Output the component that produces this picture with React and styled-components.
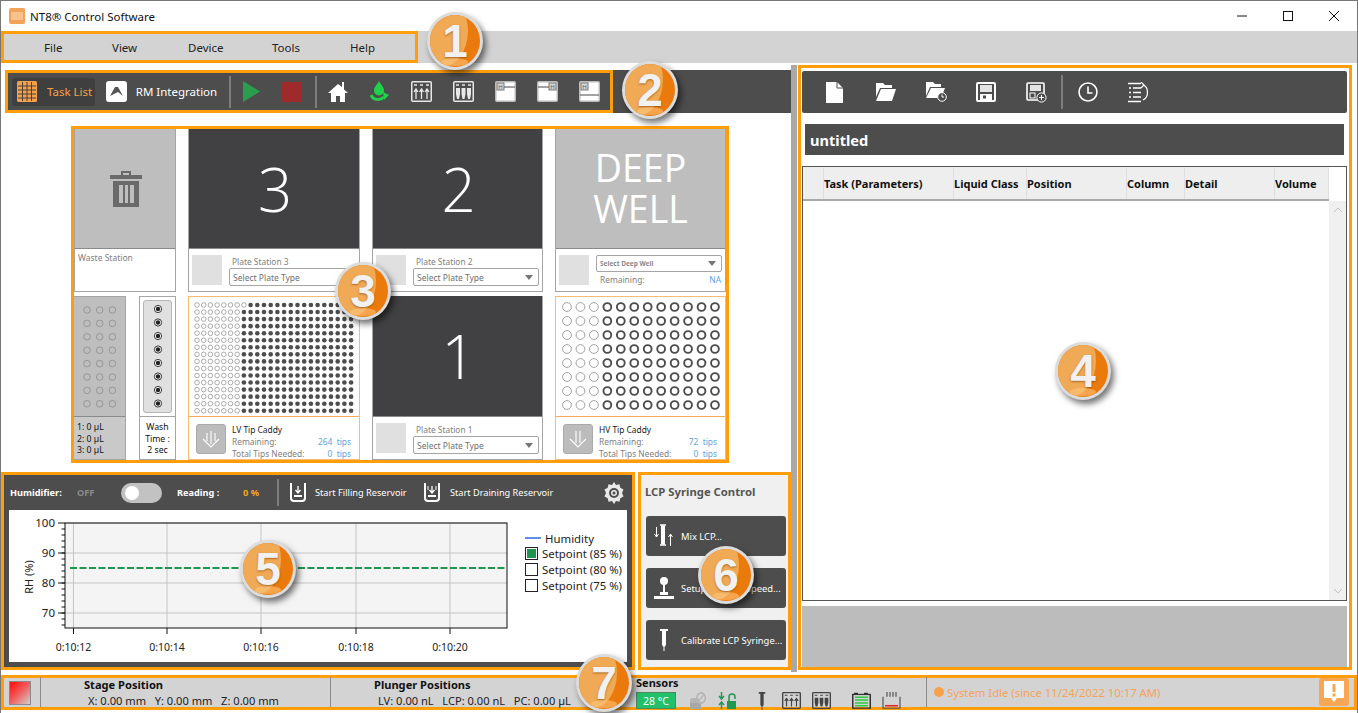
import React from 'react';
import styled, { createGlobalStyle } from 'styled-components';

const orange = '#ff9d0a';
const dark = '#4d4d4d';
const barGray = '#d3d3d3';
const font = '"Noto Sans", "Open Sans", sans-serif';

const Global = createGlobalStyle`
  html, body { margin: 0; padding: 0; background: #fff; overflow: hidden; }
  * { box-sizing: border-box; }
`;

const Window = styled.div`
  position: relative;
  width: 1358px;
  height: 713px;
  border: 1px solid #777;
  border-bottom: 0;
  font-family: ${font};
  color: #222;
  background: #fff;
  overflow: hidden;
`;

/* ---- title + menu ---- */
const TitleBar = styled.div`
  height: 30px;
  display: flex;
  align-items: center;
  padding-left: 8px;
  font-size: 11.5px;
  color: #111;
  gap: 5px;
`;
const Caption = styled.span`flex: 1;`;
const WinButtons = styled.div`
  display: flex;
  align-items: center;
  gap: 34px;
  padding-right: 17px;
`;
const MenuBar = styled.div`
  height: 32px;
  background: ${barGray};
`;
const MenuBox = styled.nav`
  width: 417px;
  height: 32px;
  border: 3px solid ${orange};
  display: grid;
  grid-template-columns: 68px 76px 84px 78px auto;
  padding-left: 40px;
  align-items: center;
  font-size: 11.5px;
  color: #222;
`;

const Main = styled.div`
  display: flex;
  margin-top: 2px;
  height: 607px;
`;
const LeftPane = styled.div`
  width: 790px;
  padding-top: 5px;
`;
const Splitter = styled.div`
  width: 6px;
  background: #a9a9a9;
`;

/* ---- main toolbar ---- */
const ToolStrip = styled.div`
  margin-left: 4px;
  height: 43px;
  background: ${dark};
`;
const ToolBox = styled.div`
  width: 608px;
  height: 43px;
  border: 3px solid ${orange};
  display: flex;
  align-items: center;
  padding-left: 4px;
`;
const TabButton = styled.div`
  display: flex;
  align-items: center;
  height: 28px;
  width: ${p => p.$w}px;
  padding-left: ${p => p.$pad}px;
  gap: ${p => p.$gap}px;
  border-radius: 3px;
  font-size: 11.5px;
  color: ${p => (p.$active ? '#f7a24b' : '#fff')};
  background: ${p => (p.$active ? '#3f3f3f' : 'transparent')};
  white-space: nowrap;
`;
const VRule = styled.div`
  width: 2px;
  height: ${p => p.$h || 32}px;
  background: #7d7d7d;
  margin: ${p => p.$m || '0'};
  flex: none;
`;
const IconSlot = styled.div`
  display: flex;
  align-items: center;
  justify-content: center;
  width: ${p => p.$w || 42}px;
`;

/* ---- deck ---- */
const Deck = styled.section`
  margin: 13px 0 0 70px;
  width: 658px;
  height: 337px;
  border: 3px solid ${orange};
  display: grid;
  grid-template-columns: 102px 172px 171px 171px;
  grid-template-rows: 163px 164px;
  column-gap: 12px;
  row-gap: 4px;
`;
const Station = styled.div`
  display: flex;
  flex-direction: column;
  border: 1px solid ${p => (p.$tip ? '#f8bb74' : '#a5a5a5')};
  border-top: ${p => (p.$tip ? '1px solid #f8bb74' : 0)};
`;
const Plate = styled.div`
  flex: 1;
  display: flex;
  align-items: center;
  justify-content: center;
  background: ${p => (p.$light ? '#bebebe' : '#414042')};
  border-bottom: 1px solid #8a8a8a;
  color: #fff;
  font-size: ${p => (p.$well ? 37.5 : 60)}px;
  font-weight: ${p => (p.$well ? 400 : 300)};
  line-height: ${p => (p.$well ? 41 : 60)}px;
  padding-left: ${p => (p.$well ? 0 : 2)}px;
  padding-bottom: ${p => (p.$well ? 2 : 0)}px;
  text-align: center;
  font-family: "Open Sans", sans-serif;
`;
const PlateFoot = styled.div`
  height: 42px;
  display: flex;
  padding: 6px 3px 0 3px;
  gap: ${p => p.$gap || 7}px;
`;
const Swatch = styled.div`
  width: 30px;
  height: 30px;
  background: #e0e0e0;
  flex: none;
`;
const FootCol = styled.div`
  flex: 1;
  min-width: 0;
  display: flex;
  flex-direction: column;
  padding-top: ${p => p.$pt || 0}px;
`;
const Tiny = styled.div`
  font-size: 8.4px;
  line-height: 12px;
  color: ${p => p.$color || '#808080'};
  padding-left: ${p => p.$pl || 0}px;
`;
const Select = styled.div`
  height: ${p => p.$h || 18}px;
  border: 1px solid #a5a5a5;
  border-radius: 2px;
  display: flex;
  align-items: center;
  justify-content: space-between;
  padding: 0 5px 0 3px;
  font-size: ${p => p.$fs || 8.5}px;
  font-weight: ${p => (p.$bold ? 700 : 400)};
  color: ${p => p.$color || '#6f6f6f'};
  background: #fff;
`;
const Caret = styled.span`
  width: 0;
  height: 0;
  border-left: 4px solid transparent;
  border-right: 4px solid transparent;
  border-top: 5px solid #777;
`;
const Row = styled.div`
  display: flex;
  justify-content: space-between;
  padding-right: ${p => p.$pr || 0}px;
  margin-top: ${p => p.$mt || 0}px;
`;
const WasteLabel = styled.div`
  height: 42px;
  padding: 3px 3px;
  font-size: 8.5px;
  color: #808080;
`;
const LeftStack = styled.div`
  display: grid;
  grid-template-columns: 52px 37px;
  column-gap: 13px;
`;
const Reservoir = styled.div`
  display: flex;
  flex-direction: column;
  border: 1px solid #a5a5a5;
  border-left: 0;
  background: #bebebe;
`;
const ReservoirFoot = styled.div`
  height: 43px;
  background: #c9c9c9;
  border-top: 1px solid #8a8a8a;
  padding: 5px 3px 0;
  font-size: 8.7px;
  line-height: 11.5px;
  color: #111;
`;
const GridArea = styled.div`
  flex: 1;
  display: flex;
  align-items: center;
  justify-content: center;
`;
const WashCol = styled.div`
  display: flex;
  flex-direction: column;
  border: 1px solid #a5a5a5;
`;
const WashWell = styled.div`
  flex: 1;
  margin: 3px;
  border: 1px solid #b5b5b5;
  border-radius: 3px;
  background: #e0e0e0;
  display: flex;
  align-items: center;
  justify-content: center;
`;
const WashFoot = styled.div`
  height: 43px;
  border-top: 1px solid #a5a5a5;
  font-size: 8.7px;
  line-height: 11.5px;
  padding-top: 5px;
  text-align: center;
  color: #111;
`;
const CaddyGrid = styled.div`
  flex: 1;
  display: flex;
  align-items: center;
  justify-content: center;
  border-bottom: 1px solid #f8a95a;
`;
const CaddyFoot = styled.div`
  height: 42px;
  display: flex;
  padding: 7px 7px 0 7px;
  gap: 6px;
`;
const EjectBtn = styled.div`
  width: 30px;
  height: 30px;
  flex: none;
  border: 1px solid #aaa;
  border-radius: 3px;
  background: #bcbcbc;
  display: flex;
  align-items: center;
  justify-content: center;
`;
const Tips = styled.span`
  color: #5aa6dd;
  white-space: pre;
`;

/* ---- humidity + LCP ---- */
const BottomRow = styled.div`
  display: flex;
  margin-top: 9px;
  gap: 3px;
  height: 198px;
`;
const HumidityPanel = styled.section`
  width: 634px;
  border: 3px solid ${orange};
  background: ${dark};
  display: flex;
  flex-direction: column;
  padding: 0 5px 5px 5px;
`;
const HumBar = styled.div`
  height: 36px;
  display: flex;
  align-items: center;
  padding-left: 1px;
  color: #fff;
  font-size: 9.2px;
`;
const HumText = styled.span`
  font-weight: ${p => (p.$bold ? 700 : 400)};
  color: ${p => p.$color || '#fff'};
  margin-left: ${p => p.$ml || 0}px;
  width: ${p => (p.$w ? `${p.$w}px` : 'auto')};
  flex: none;
  white-space: nowrap;
`;
const Toggle = styled.div`
  position: relative;
  flex: none;
  width: 41px;
  height: 20px;
  border-radius: 10px;
  background: #c2c2c2;
  &::after {
    content: "";
    position: absolute;
    left: 4px;
    top: 3px;
    width: 14px;
    height: 14px;
    border-radius: 50%;
    background: #fff;
  }
`;
const ChartCard = styled.div`
  flex: 1;
  background: #fff;
  display: flex;
`;
const Legend = styled.div`
  margin-left: 14px;
  padding-top: 21px;
  font-size: 11.4px;
  color: #222;
  white-space: nowrap;
`;
const LegendRow = styled.div`
  display: flex;
  align-items: center;
  gap: 4px;
  height: ${p => p.$h || 16}px;
`;
const LegendLine = styled.span`
  width: 16px;
  height: 2px;
  background: #5b8fe8;
`;
const CheckBox = styled.span`
  width: 13px;
  height: 13px;
  border: 1px solid #222;
  background: #fff;
  padding: 1px;
  display: block;
  &::after {
    content: "";
    display: ${p => (p.$on ? 'block' : 'none')};
    width: 100%;
    height: 100%;
    background: #1f9650;
  }
`;
const LcpPanel = styled.section`
  width: 153px;
  border: 3px solid ${orange};
  background: #f0f0f0;
  padding: 0 2px 0 5px;
`;
const LcpTitle = styled.div`
  height: 32px;
  margin: 0 0 9px -1px;
  display: flex;
  align-items: center;
  font-size: 11.3px;
  font-weight: 700;
  color: #555;
  white-space: nowrap;
`;
const LcpStack = styled.div`
  display: flex;
  flex-direction: column;
  gap: 12px;
`;
const LcpButton = styled.div`
  height: 40px;
  background: ${dark};
  border-radius: 3px;
  display: flex;
  align-items: center;
  color: #fff;
  font-size: 9.4px;
  white-space: nowrap;
`;
const LcpIcon = styled.div`
  width: 35px;
  display: flex;
  justify-content: center;
`;

/* ---- task list ---- */
const TaskPanel = styled.section`
  margin-left: 1px;
  width: 554px;
  height: 605px;
  border: 3px solid ${orange};
  padding: 3px 2px 0 1px;
  display: flex;
  flex-direction: column;
`;
const TaskTools = styled.div`
  height: 42px;
  background: ${dark};
  border-radius: 2px;
  display: flex;
  align-items: center;
  padding-left: 24px;
`;
const TaskSlot = styled.div`
  width: 50px;
  display: flex;
  align-items: center;
`;
const FileName = styled.div`
  margin: 11px 3px 0 3px;
  height: 31px;
  background: ${dark};
  color: #fff;
  font-weight: 700;
  font-size: 14.6px;
  display: flex;
  align-items: center;
  padding-left: 5px;
`;
const Table = styled.div`
  margin-top: 11px;
  height: 435px;
  border: 1px solid #555;
  display: flex;
  flex-direction: column;
`;
const HeaderRow = styled.div`
  width: 526px;
  height: 34px;
  padding-top: 1px;
  background: #eeeeee;
  border-bottom: 2px solid #a9a9a9;
  display: grid;
  grid-template-columns: 21px 130px 73px 100px 58px 90px 1fr;
  font-size: 11px;
  font-weight: 700;
  color: #111;
  white-space: nowrap;
`;
const HeadCell = styled.div`
  display: flex;
  align-items: center;
  border-right: 1px solid #dfdfdf;
  overflow: hidden;
`;
const TableBody = styled.div`
  flex: 1;
  display: flex;
  justify-content: flex-end;
`;
const ScrollTrack = styled.div`
  width: 17px;
  background: #f0f0f0;
  display: flex;
  flex-direction: column;
  justify-content: space-between;
  align-items: center;
  padding: 6px 0;
`;
const TaskFoot = styled.div`
  flex: 1;
  margin-top: 5px;
  background: #bcbcbc;
`;

/* ---- status bar ---- */
const StatusBar = styled.footer`
  margin-top: 3px;
  width: 1356px;
  height: 35px;
  border: 3px solid ${orange};
  background: ${barGray};
  display: flex;
`;
const LedCell = styled.div`
  width: 36px;
  display: flex;
  align-items: center;
  padding-left: 5px;
`;
const Led = styled.div`
  width: 22px;
  height: 24px;
  border: 1px solid #8a8a8a;
  background: linear-gradient(135deg, #ff1a1a 10%, #f06060 50%, #cfcfcf 100%);
`;
const PosCell = styled.div`
  width: ${p => p.$w}px;
  border-left: 1px solid #8a8a8a;
  padding-left: ${p => p.$pl}px;
  margin-top: -1px;
`;
const PosTitle = styled.div`
  font-size: 11.1px;
  font-weight: 700;
  line-height: 16px;
  color: #111;
`;
const PosValue = styled.div`
  font-size: 11.1px;
  line-height: 15px;
  color: #222;
  padding-left: 4px;
  white-space: pre;
`;
const SensorCell = styled.div`
  width: 306px;
  padding-left: 15px;
  border-left: 1px solid #8a8a8a;
  margin-top: -1px;
`;
const SensorTitle = styled.div`
  font-size: 11px;
  font-weight: 700;
  line-height: 12px;
  color: #111;
`;
const SensorRow = styled.div`
  display: flex;
  align-items: flex-start;
  margin-top: 3px;
`;
const Temp = styled.div`
  width: 40px;
  height: 17px;
  background: #22c06a;
  border: 1px solid #4a8a60;
  color: #fff;
  font-size: 10.5px;
  display: flex;
  align-items: center;
  justify-content: center;
`;
const SensorIcon = styled.div`
  margin-left: ${p => p.$ml}px;
  height: 17px;
`;
const IdleCell = styled.div`
  flex: 1;
  border-left: 1px solid #8a8a8a;
  margin-top: -1px;
  display: flex;
  align-items: center;
  padding-left: 7px;
  gap: 3px;
  color: #f3a35c;
  font-size: 11.3px;
`;
const IdleDot = styled.span`
  width: 10px;
  height: 10px;
  border-radius: 50%;
  background: #f7a24b;
`;
const Spacer = styled.span`flex: 1;`;
const AlertBtn = styled.div`
  width: 30px;
  height: 28px;
  margin-right: 5px;
  border-radius: 3px;
  background: #f7a754;
  display: flex;
  align-items: center;
  justify-content: center;
`;

/* ---- numbered callouts, over everything ---- */
const Badge = styled.div`
  position: absolute;
  left: ${p => p.$x - 28}px;
  top: ${p => p.$y - 29}px;
  width: 56px;
  height: 58px;
  border-radius: 50%;
  border: 3px solid #dcdcdc;
  background: #ea7a0c;
  box-shadow: 3px 4px 6px rgba(0, 0, 0, 0.55);
  display: flex;
  align-items: center;
  justify-content: center;
  overflow: hidden;
  color: #f1f1f1;
  font-family: "Liberation Sans", sans-serif;
  font-weight: 700;
  font-size: 46px;
  text-shadow: 0 1px 2px rgba(120, 60, 0, 0.6);
  &::before {
    content: "";
    position: absolute;
    left: -14px;
    top: -20px;
    width: 52px;
    height: 72px;
    border-radius: 50%;
    background: #f0a954;
  }
  &::after {
    content: "";
    position: absolute;
    left: 12px;
    bottom: 1px;
    width: 26px;
    height: 8px;
    border-radius: 50%;
    background: rgba(255, 200, 130, 0.55);
  }
`;
const BadgeNum = styled.span`
  position: relative;
  z-index: 1;
`;

/* ---- icons ---- */
const WinIcons = () => (
  <WinButtons>
    <svg width="12" height="12" viewBox="0 0 12 12"><path d="M1 6h10" stroke="#111" strokeWidth="1" /></svg>
    <svg width="12" height="12" viewBox="0 0 12 12"><rect x="1.5" y="1.5" width="9" height="9" fill="none" stroke="#111" /></svg>
    <svg width="12" height="12" viewBox="0 0 12 12"><path d="M1 1l10 10M11 1L1 11" stroke="#111" strokeWidth="1" /></svg>
  </WinButtons>
);

const AppIcon = () => (
  <svg width="16" height="16" viewBox="0 0 16 16">
    <rect width="16" height="16" rx="2" fill="#f4a259" />
    <path d="M3 4v8M5 4v8M7 4v8M9 4v8M11 4v8M13 4v8" stroke="#fde0c0" strokeWidth="1" />
  </svg>
);

const TaskGridIcon = () => (
  <svg width="20" height="21" viewBox="0 0 20 21">
    <rect width="20" height="21" rx="1.5" fill="#f4a14e" />
    <path d="M5.5 1v19M10 1v19M14.5 1v19M1 5h18M1 9h18M1 13h18M1 17h18" stroke="#4a4038" strokeWidth="1" />
  </svg>
);

const RmIcon = () => (
  <svg width="21" height="21" viewBox="0 0 21 21">
    <rect width="21" height="21" rx="3" fill="#fff" />
    <path d="M4 15l5-9h3l5 9-5-4z" fill="#555" />
  </svg>
);

const Play = () => <svg width="17" height="21" viewBox="0 0 17 21"><path d="M0 0l17 10.5L0 21z" fill="#2a9d4e" /></svg>;
const Stop = () => <svg width="20" height="20" viewBox="0 0 20 20"><rect width="20" height="20" fill="#9e2a2b" /></svg>;

const House = () => (
  <svg width="20" height="21" viewBox="0 0 20 21">
    <path d="M10 3L0 12h3v9h5v-6h4v6h5v-9h3l-4-3.6V1h-2v5z" fill="#fff" />
  </svg>
);

const PrimeDrop = () => (
  <svg width="20" height="21" viewBox="0 0 20 21">
    <path d="M9 0c2 4 5 6 5 9.5a5 5 0 0 1-10 0C4 6 7 4 9 0z" fill="#20d24a" />
    <path d="M1 14c2 5 9 6 13 2" fill="none" stroke="#20d24a" strokeWidth="3" />
    <path d="M13 11l6 3-5 5z" fill="#20d24a" />
  </svg>
);

const Rack = ({ color = '#e8e8e8', filled, w = 21, h = 21 }) => (
  <svg width={w} height={h} viewBox="0 0 21 21" preserveAspectRatio="none">
    <rect x="0.75" y="0.75" width="19.5" height="19.5" rx="1" fill="none" stroke={color} strokeWidth="1.5" />
    <path d="M3 4h3M9 4h3M15 4h3" stroke={color} strokeWidth="1.5" />
    {[5, 10.5, 16].map(x => (filled ? (
      <path key={x} d={`M${x - 2} 7h4v6l-1 5h-2l-1-5z`} fill={color} />
    ) : (
      <path key={x} d={`M${x} 18V9M${x - 2} 11l2-3 2 3`} stroke={color} fill="none" strokeWidth="1.3" />
    )))}
  </svg>
);

const Bay = ({ left, low }) => (
  <svg width="21" height="21" viewBox="0 0 21 21">
    <rect x="0.75" y="0.75" width="19.5" height="19.5" rx="1" fill="#fff" stroke="#bbb" strokeWidth="1.5" />
    <rect x={left ? 2 : 12} y="2" width="7" height="7" fill="#d8d8d8" stroke="#777" />
    <text x={left ? 5.5 : 15.5} y="7.800" fontSize="6" textAnchor="middle" fill="#555" fontFamily={font}>H</text>
    <path d={low ? 'M1 14h19' : (left ? 'M9 6h11' : 'M1 6h11')} stroke="#666" strokeWidth="1.2" />
  </svg>
);

const NewFile = () => <svg width="17" height="21" viewBox="0 0 17 21"><path d="M0 0h11l6 6v15H0z" fill="#fff" /><path d="M11 0v6h6" fill="none" stroke="#4d4d4d" /></svg>;
const OpenFolder = () => <svg width="20" height="18" viewBox="0 0 20 18"><path d="M0 2V0h7l2 2h7v3H4L0 14z" fill="#fff" /><path d="M5 6h15l-4 12H0z" fill="#fff" /></svg>;
const RecentFolder = () => (
  <svg width="21" height="20" viewBox="0 0 21 20">
    <path d="M0 2V0h7l2 2h6v3H4L0 14z" fill="#fff" /><path d="M5 6h14l-4 10H0z" fill="#fff" />
    <circle cx="16" cy="15" r="4.3" fill="#4d4d4d" stroke="#fff" /><path d="M16 12.5V15h2" fill="none" stroke="#fff" />
  </svg>
);
const Floppy = () => (
  <svg width="20" height="20" viewBox="0 0 20 20">
    <rect x="1" y="1" width="18" height="18" rx="1" fill="none" stroke="#fff" strokeWidth="2" />
    <rect x="4" y="3" width="12" height="7" fill="#fff" opacity="0.85" />
    <rect x="4" y="12" width="12" height="6" fill="#fff" /><rect x="7" y="13.5" width="3" height="3" fill="#4d4d4d" />
  </svg>
);
const FloppyPlus = () => (
  <svg width="21" height="21" viewBox="0 0 21 21">
    <rect x="1" y="1" width="17" height="17" rx="1" fill="none" stroke="#fff" strokeWidth="1.6" />
    <rect x="4" y="3" width="11" height="6" fill="#fff" opacity="0.85" />
    <rect x="4" y="11" width="5" height="5" fill="none" stroke="#fff" />
    <circle cx="15.5" cy="15.5" r="4.6" fill="#4d4d4d" stroke="#fff" /><path d="M15.5 13v5M13 15.5h5" stroke="#fff" />
  </svg>
);
const Clock = () => (
  <svg width="20" height="20" viewBox="0 0 20 20">
    <circle cx="10" cy="10" r="9" fill="none" stroke="#fff" strokeWidth="1.6" /><path d="M10 4.5V11h4.5" fill="none" stroke="#fff" strokeWidth="1.6" />
  </svg>
);
const ListUndo = () => (
  <svg width="21" height="21" viewBox="0 0 21 21">
    <path d="M0 1.5h13M0 19.5h13M5 6h8M5 10.5h8M5 15h8" stroke="#fff" strokeWidth="1.3" />
    <path d="M1 6h2M1 10.5h2M1 15h2" stroke="#fff" strokeWidth="1.3" />
    <path d="M15 3c6 2 6 12 0 15" fill="none" stroke="#fff" strokeWidth="1.3" /><path d="M13 0l3 3-3 3" fill="none" stroke="#fff" strokeWidth="1.2" />
  </svg>
);
const Trash = () => (
  <svg width="32" height="36" viewBox="0 0 32 36">
    <path d="M11 4V0h10v4h11v4H0V4zM13 2v2h6V2z" fill="#6a6a6a" fillRule="evenodd" />
    <path d="M3 10h26v26H3zM9 14v18h4V14zM15 14v18h3V14zM20 14v18h4V14z" fill="#6a6a6a" fillRule="evenodd" />
  </svg>
);
const Eject = ({ triple }) => (
  <svg width="20" height="20" viewBox="0 0 20 20" fill="none" stroke="#fff" strokeWidth="1.1">
    <path d="M2 10l8 8 8-8" />
    {triple ? <path d="M6 12V4M10 15V2M14 12V4" /> : <path d="M8 14V2M12 14V2" />}
  </svg>
);
const Fill = ({ down }) => (
  <svg width="16" height="19" viewBox="0 0 16 19" style={{ flex: 'none' }}>
    <path d="M1 0v15a3 3 0 0 0 3 3h8a3 3 0 0 0 3-3V0" fill="none" stroke="#fff" strokeWidth="2" />
    <path d="M8 3v6M5.5 7L8 10l2.5-3" stroke="#fff" fill="none" strokeWidth="1.3" />
    <path d="M4 13h8" stroke="#fff" strokeWidth="2" />
    {down && <path d="M4 3v4M12 3v4" stroke="#fff" strokeWidth="1" />}
  </svg>
);
const Gear = () => (
  <svg width="24" height="24" viewBox="0 0 24 24" style={{ flex: 'none', marginLeft: -2 }}>
    <path d="M12 1l2 3 3.5-.8.8 3.5 3.2 1.8-1.5 3.5 1.5 3.5-3.2 1.8-.8 3.5L14 20l-2 3-2-3-3.5.8-.8-3.5-3.2-1.8L4 12 2.500 8.500l3.200-1.800.8-3.500L10 4z" fill="#e8e8e8" />
    <circle cx="12" cy="12" r="5" fill="#4d4d4d" /><circle cx="12" cy="12" r="3" fill="#e8e8e8" />
    <circle cx="12" cy="12" r="1.500" fill="#4d4d4d" />
  </svg>
);
const MixIcon = () => (
  <svg width="20" height="24" viewBox="0 0 20 24" fill="none" stroke="#fff">
    <path d="M2.500 3v10M0.500 10l2 3 2-3" /><path d="M16.500 22V11M14.500 13l2-3 2 3" />
    <path d="M6 1h6M6 21h6" strokeWidth="1.500" /><rect x="7.500" y="2" width="3" height="18" fill="#fff" />
  </svg>
);
const Joystick = () => (
  <svg width="20" height="24" viewBox="0 0 20 24">
    <circle cx="10" cy="5" r="4" fill="#fff" /><rect x="9" y="8" width="2" height="10" fill="#fff" />
    <rect x="6" y="16" width="8" height="3" fill="#fff" /><rect y="20" width="20" height="3" fill="#fff" />
  </svg>
);
const Syringe = ({ fill = '#fff', w = 10, h = 22 }) => (
  <svg width={w} height={h} viewBox="0 0 10 22">
    <path d="M1 0h8v2H7v14l-1.500 2v4h-1v-4L3 16V2H1z" fill={fill} />
  </svg>
);
const LockIcon = () => (
  <svg width="17" height="17" viewBox="0 0 20 17" preserveAspectRatio="none">
    <rect x="0" y="6" width="11" height="11" rx="3" fill="#b4b4b4" /><rect x="0" y="11" width="13" height="6" fill="#a8a8a8" />
    <circle cx="13" cy="6" r="5" fill="none" stroke="#b4b4b4" strokeWidth="1.800" /><path d="M10 9l6-6" stroke="#b4b4b4" strokeWidth="1.500" />
  </svg>
);
const SwapLock = () => (
  <svg width="19" height="17" viewBox="0 0 19 17">
    <path d="M3.500 0v6M1 4l2.500 3L6 4M3.500 17v-6M1 13l2.500-3L6 13" fill="none" stroke="#1e9a50" strokeWidth="1.500" />
    <path d="M11 9V5a3 3 0 0 1 6 0v2" fill="none" stroke="#1e9a50" strokeWidth="1.500" />
    <rect x="9" y="9" width="9" height="8" fill="#1e9a50" />
  </svg>
);
const Battery = () => (
  <svg width="19" height="17" viewBox="0 0 19 21" preserveAspectRatio="none">
    <path d="M2 1h4v2H2zM12 1h4v2h-4z" fill="#333" />
    <rect x="0.750" y="3" width="17.500" height="17" fill="none" stroke="#333" strokeWidth="1.500" />
    <path d="M3 6.500h13M3 10h13M3 13.500h13M3 17h13" stroke="#2ecc40" strokeWidth="1.800" />
  </svg>
);
const Waste = () => (
  <svg width="19" height="17" viewBox="0 0 19 21" preserveAspectRatio="none">
    <path d="M5 0v6M8 0v6M11 0v6M14 0v6" stroke="#555" strokeWidth="1.200" />
    <path d="M1 6v14h17V6" fill="none" stroke="#555" strokeWidth="1.200" />
    <path d="M3 17h13" stroke="#e0252b" strokeWidth="2" />
  </svg>
);
const Alert = () => (
  <svg width="22" height="24" viewBox="0 0 22 24">
    <path d="M1 1h20v17h-7l-3 4-3-4H1z" fill="#fff" />
    <rect x="9.500" y="4" width="3" height="8" fill="#f7a754" /><rect x="9.500" y="13.500" width="3" height="3" fill="#f7a754" />
  </svg>
);

const ChevUp = () => <svg width="10" height="6" viewBox="0 0 10 6"><path d="M1 5l4-4 4 4" fill="none" stroke="#c4c4c4" /></svg>;
const ChevDown = () => <svg width="10" height="6" viewBox="0 0 10 6"><path d="M1 1l4 4 4-4" fill="none" stroke="#c4c4c4" /></svg>;

/* tip layouts */
const LvTips = () => {
  const dots = [];
  for (let r = 0; r < 16; r++) {
    for (let c = 0; c < 24; c++) {
      const used = c < (r === 0 ? 8 : 7);
      dots.push(used
        ? <circle key={`${r}-${c}`} cx={4 + c * 6.7} cy={5 + r * 7.05} r="2.3" fill="none" stroke="#8a8a8a" strokeWidth="0.7" />
        : <circle key={`${r}-${c}`} cx={4 + c * 6.7} cy={5 + r * 7.05} r="2.3" fill="#4d4d4d" />);
    }
  }
  return <svg width="163" height="114">{dots}</svg>;
};

const HvTips = () => {
  const dots = [];
  for (let r = 0; r < 8; r++) {
    for (let c = 0; c < 12; c++) {
      const used = c < 3;
      dots.push(<circle key={`${r}-${c}`} cx={6 + c * 13.45} cy={6 + r * 14} r={used ? 4.4 : 3.9} fill="none" stroke={used ? '#8a8a8a' : '#4d4d4d'} strokeWidth={used ? 0.8 : 1.9} />);
    }
  }
  return <svg width="160" height="111">{dots}</svg>;
};

const ReservoirWells = () => {
  const dots = [];
  for (let r = 0; r < 8; r++) {
    for (let c = 0; c < 3; c++) {
      dots.push(<circle key={`${r}-${c}`} cx={5 + c * 12.7} cy={5 + r * 13.4} r="3.3" fill="none" stroke="#8d8d8d" strokeWidth="0.8" />);
    }
  }
  return <svg width="36" height="104">{dots}</svg>;
};

const WashPorts = () => {
  const dots = [];
  for (let r = 0; r < 8; r++) {
    dots.push(<g key={r}><circle cx="6" cy={6 + r * 13.5} r="3.6" fill="#fff" stroke="#222" strokeWidth="0.9" /><circle cx="6" cy={6 + r * 13.5} r="2.2" fill="#222" /></g>);
  }
  return <svg width="12" height="108">{dots}</svg>;
};

const ticksY = [100, 90, 80, 70];
const ticksX = [[73.5 - 9, '0:10:12'], [167 - 9, '0:10:14'], [261 - 9, '0:10:16'], [356 - 9, '0:10:18'], [450 - 9, '0:10:20']];

const HumidityChart = () => {
  const y = v => 13 + (100 - v) * 3;
  const minors = [];
  for (let v = 66; v < 100; v += 2) minors.push(v);
  return (
    <svg width="502" height="152" viewBox="0 0 502 152" style={{ flex: 'none' }}>
      <rect x="56" y="13" width="442" height="105" fill="#f4f4f4" />
      {ticksY.map(v => <path key={v} d={`M56 ${y(v)}h442`} stroke="#c4c4c4" />)}
      {ticksX.map(([x]) => <path key={x} d={`M${x} 13v105`} stroke="#c4c4c4" />)}
      <path d={`M61 ${y(85)}h435`} stroke="#1f9650" strokeWidth="2" strokeDasharray="7 2.500" />
      <rect x="56" y="13" width="442" height="105" fill="none" stroke="#111" />
      {minors.map(v => <path key={v} d={`M52.500 ${y(v)}h3.500`} stroke="#111" />)}
      {ticksY.map(v => <path key={v} d={`M49 ${y(v)}h7`} stroke="#111" />)}
      {ticksX.map(([x]) => <path key={x} d={`M${x} 118v6`} stroke="#111" />)}
      {ticksY.map(v => <text key={v} x="46" y={y(v) + 4} fontSize="11.5" textAnchor="end" fill="#222" fontFamily={font}>{v}</text>)}
      {ticksX.map(([x, t]) => <text key={t} x={x} y="141" fontSize="10.5" textAnchor="middle" fill="#222" fontFamily={font}>{t}</text>)}
      <text transform={`translate(24 ${y(82)}) rotate(-90)`} fontSize="11" textAnchor="middle" fill="#222" fontFamily={font}>RH (%)</text>
    </svg>
  );
};

const PlateStation = ({ n }) => (
  <Station>
    <Plate>{n}</Plate>
    <PlateFoot>
      <Swatch />
      <FootCol $pt={1}>
        <Tiny $pl={3}>Plate Station {n}</Tiny>
        <Select>Select Plate Type<Caret /></Select>
      </FootCol>
    </PlateFoot>
  </Station>
);

const TipCaddy = ({ name, remaining, tripleArrow, children }) => (
  <Station $tip>
    <CaddyGrid>{children}</CaddyGrid>
    <CaddyFoot>
      <EjectBtn><Eject triple={tripleArrow} /></EjectBtn>
      <FootCol>
        <Tiny $color="#222">{name}</Tiny>
        <Row $pr={1}><Tiny>Remaining:</Tiny><Tiny><Tips>{remaining}  tips</Tips></Tiny></Row>
        <Row $pr={1}><Tiny>Total Tips Needed:</Tiny><Tiny><Tips>0  tips</Tips></Tiny></Row>
      </FootCol>
    </CaddyFoot>
  </Station>
);

const badges = [[1, 455, 41], [2, 650, 90], [3, 363, 291], [4, 1083, 371], [5, 268, 569], [6, 726, 575], [7, 604, 683]];
const columns = ['', 'Task (Parameters)', 'Liquid Class', 'Position', 'Column', 'Detail', 'Volume'];

export default function App() {
  return (
    <Window>
      <Global />
      <TitleBar>
        <AppIcon />
        <Caption>NT8® Control Software</Caption>
        <WinIcons />
      </TitleBar>
      <MenuBar>
        <MenuBox>
          <span>File</span><span>View</span><span>Device</span><span>Tools</span><span>Help</span>
        </MenuBox>
      </MenuBar>

      <Main>
        <LeftPane>
          <ToolStrip>
            <ToolBox>
              <TabButton $active $w={83} $pad={5} $gap={10}><TaskGridIcon />Task List</TabButton>
              <TabButton $w={135} $pad={11} $gap={9}><RmIcon />RM Integration</TabButton>
              <VRule />
              <IconSlot $w={40}><Play /></IconSlot>
              <IconSlot $w={40}><Stop /></IconSlot>
              <VRule $m="0 0 0 4px" />
              <IconSlot><House /></IconSlot>
              <IconSlot><PrimeDrop /></IconSlot>
              <IconSlot><Rack /></IconSlot>
              <IconSlot><Rack filled /></IconSlot>
              <IconSlot><Bay left /></IconSlot>
              <IconSlot><Bay /></IconSlot>
              <IconSlot><Bay left low /></IconSlot>
            </ToolBox>
          </ToolStrip>

          <Deck>
            <Station>
              <Plate $light><Trash /></Plate>
              <WasteLabel>Waste Station</WasteLabel>
            </Station>
            <PlateStation n={3} />
            <PlateStation n={2} />
            <Station>
              <Plate $light $well>DEEP<br />WELL</Plate>
              <PlateFoot $gap={7}>
                <Swatch />
                <FootCol>
                  <Select $h={17} $fs={6.5} $bold $color="#8a8a8a">Select Deep Well<Caret /></Select>
                  <Row $pr={1} $mt={2}><Tiny $pl={4}>Remaining:</Tiny><Tiny $color="#5aa6dd">NA</Tiny></Row>
                </FootCol>
              </PlateFoot>
            </Station>

            <LeftStack>
              <Reservoir>
                <GridArea><ReservoirWells /></GridArea>
                <ReservoirFoot>1: 0 µL<br />2: 0 µL<br />3: 0 µL</ReservoirFoot>
              </Reservoir>
              <WashCol>
                <WashWell><WashPorts /></WashWell>
                <WashFoot>Wash<br />Time :<br />2 sec</WashFoot>
              </WashCol>
            </LeftStack>
            <TipCaddy name="LV Tip Caddy" remaining={264} tripleArrow><LvTips /></TipCaddy>
            <PlateStation n={1} />
            <TipCaddy name="HV Tip Caddy" remaining={72}><HvTips /></TipCaddy>
          </Deck>

          <BottomRow>
            <HumidityPanel>
              <HumBar>
                <HumText $bold $w={67}>Humidifier:</HumText>
                <HumText $color="#8a8a8a" $bold $w={44}>OFF</HumText>
                <Toggle />
                <HumText $bold $ml={15} $w={66}>Reading :</HumText>
                <HumText $color="#f5a623" $bold $w={34}>0 %</HumText>
                <VRule $h={27} $m="0 11px 0 0" />
                <Fill />
                <HumText $ml={9} $w={109}>Start Filling Reservoir</HumText>
                <Fill down />
                <HumText $ml={10} $w={154}>Start Draining Reservoir</HumText>
                <Gear />
              </HumBar>
              <ChartCard>
                <HumidityChart />
                <Legend>
                  <LegendRow $h={14}><LegendLine />Humidity</LegendRow>
                  <LegendRow><CheckBox $on />Setpoint (85 %)</LegendRow>
                  <LegendRow><CheckBox />Setpoint (80 %)</LegendRow>
                  <LegendRow><CheckBox />Setpoint (75 %)</LegendRow>
                </Legend>
              </ChartCard>
            </HumidityPanel>

            <LcpPanel>
              <LcpTitle>LCP Syringe Control</LcpTitle>
              <LcpStack>
                <LcpButton><LcpIcon><MixIcon /></LcpIcon>Mix LCP...</LcpButton>
                <LcpButton><LcpIcon><Joystick /></LcpIcon>Setup Plunger Speed...</LcpButton>
                <LcpButton><LcpIcon><Syringe /></LcpIcon>Calibrate LCP Syringe...</LcpButton>
              </LcpStack>
            </LcpPanel>
          </BottomRow>
        </LeftPane>

        <Splitter />

        <TaskPanel>
          <TaskTools>
            <TaskSlot><NewFile /></TaskSlot>
            <TaskSlot><OpenFolder /></TaskSlot>
            <TaskSlot><RecentFolder /></TaskSlot>
            <TaskSlot><Floppy /></TaskSlot>
            <TaskSlot><FloppyPlus /></TaskSlot>
            <VRule $h={34} $m="0 15px 0 -15px" />
            <TaskSlot><Clock /></TaskSlot>
            <TaskSlot><ListUndo /></TaskSlot>
          </TaskTools>
          <FileName>untitled</FileName>
          <Table>
            <HeaderRow>
              {columns.map(c => <HeadCell key={c}>{c}</HeadCell>)}
            </HeaderRow>
            <TableBody>
              <ScrollTrack><ChevUp /><ChevDown /></ScrollTrack>
            </TableBody>
          </Table>
          <TaskFoot />
        </TaskPanel>
      </Main>

      <StatusBar>
        <LedCell><Led /></LedCell>
        <PosCell $w={290} $pl={43}>
          <PosTitle>Stage Position</PosTitle>
          <PosValue>X: 0.00 mm   Y: 0.00 mm   Z: 0.00 mm</PosValue>
        </PosCell>
        <PosCell $w={290} $pl={43}>
          <PosTitle>Plunger Positions</PosTitle>
          <PosValue>LV: 0.00 nL   LCP: 0.00 nL   PC: 0.00 µL</PosValue>
        </PosCell>
        <SensorCell>
          <SensorTitle>Sensors</SensorTitle>
          <SensorRow>
            <Temp>28 °C</Temp>
            <SensorIcon $ml={14}><LockIcon /></SensorIcon>
            <SensorIcon $ml={11}><SwapLock /></SensorIcon>
            <SensorIcon $ml={20}><Syringe fill="#444" w={10} h={18} /></SensorIcon>
            <SensorIcon $ml={15}><Rack color="#444" w={19} h={17} /></SensorIcon>
            <SensorIcon $ml={11}><Rack color="#444" filled w={19} h={17} /></SensorIcon>
            <SensorIcon $ml={21}><Battery /></SensorIcon>
            <SensorIcon $ml={11}><Waste /></SensorIcon>
          </SensorRow>
        </SensorCell>
        <IdleCell>
          <IdleDot />
          System Idle (since 11/24/2022 10:17 AM)
          <Spacer />
          <AlertBtn><Alert /></AlertBtn>
        </IdleCell>
      </StatusBar>

      {badges.map(([n, x, y]) => (
        <Badge key={n} $x={x - 1} $y={y - 1}><BadgeNum>{n}</BadgeNum></Badge>
      ))}
    </Window>
  );
}
